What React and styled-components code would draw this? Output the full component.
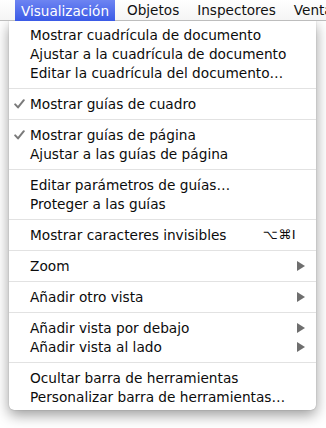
import React from "react";
import styled, { createGlobalStyle } from "styled-components";

const GlobalStyle = createGlobalStyle`
  html, body {
    margin: 0;
    padding: 0;
    background: #ffffff;
  }
  body {
    font-family: "DejaVu Sans", "Liberation Sans", sans-serif;
  }
`;

const menuTitles = ["Visualización", "Objetos", "Inspectores", "Ventana"];

const groups = [
  [
    { label: "Mostrar cuadrícula de documento" },
    { label: "Ajustar a la cuadrícula de documento" },
    { label: "Editar la cuadrícula del documento…" },
  ],
  [{ label: "Mostrar guías de cuadro", checked: true }],
  [
    { label: "Mostrar guías de página", checked: true },
    { label: "Ajustar a las guías de página" },
  ],
  [
    { label: "Editar parámetros de guías…" },
    { label: "Proteger a las guías" },
  ],
  [{ label: "Mostrar caracteres invisibles", shortcut: "⌥⌘I" }],
  [{ label: "Zoom", submenu: true }],
  [{ label: "Añadir otro vista", submenu: true }],
  [
    { label: "Añadir vista por debajo", submenu: true },
    { label: "Añadir vista al lado", submenu: true },
  ],
  [
    { label: "Ocultar barra de herramientas" },
    { label: "Personalizar barra de herramientas…" },
  ],
];

function CheckIcon() {
  return (
    <svg width="11" height="10" viewBox="0 0 11 10">
      <path
        d="M1.2 5.4 L4 8.4 L9.8 1.2"
        fill="none"
        stroke="#7a7a7a"
        strokeWidth="2"
        strokeLinecap="round"
        strokeLinejoin="round"
      />
    </svg>
  );
}

function SubmenuArrow() {
  return (
    <svg width="8" height="10" viewBox="0 0 8 10">
      <polygon points="0,0 8,5 0,10" fill="#6e6e6e" />
    </svg>
  );
}

export default function App() {
  return (
    <>
      <GlobalStyle />
      <Screen>
        <MenuBar>
          {menuTitles.map((t, i) => (
            <MenuTitle key={t} $active={i === 0}>
              {t}
            </MenuTitle>
          ))}
        </MenuBar>
        <Dropdown>
          {groups.map((group, gi) => (
            <React.Fragment key={gi}>
              {gi > 0 && <Separator />}
              {group.map((item) => (
                <Item key={item.label}>
                  <CheckCell>{item.checked && <CheckIcon />}</CheckCell>
                  <Label>{item.label}</Label>
                  {item.shortcut && <Shortcut>{item.shortcut}</Shortcut>}
                  {item.submenu && (
                    <ArrowCell>
                      <SubmenuArrow />
                    </ArrowCell>
                  )}
                </Item>
              ))}
            </React.Fragment>
          ))}
        </Dropdown>
      </Screen>
    </>
  );
}

const Screen = styled.div`
  width: 326px;
  height: 428px;
  overflow: hidden;
  background: #ffffff;
`;

const MenuBar = styled.div`
  height: 21px;
  display: flex;
  align-items: stretch;
  padding-left: 15px;
  background: linear-gradient(#ffffff, #f4f4f4);
  box-shadow: inset 0 -1px 0 #bdbdbd;
  white-space: nowrap;
  overflow: hidden;
  position: relative;
  z-index: 2;
`;

const MenuTitle = styled.div`
  display: flex;
  align-items: center;
  height: ${(p) => (p.$active ? "21px" : "20px")};
  padding: 0 6px;
  margin-right: 6px;
  font-size: 13.6px;
  color: ${(p) => (p.$active ? "#ffffff" : "#111111")};
  background: ${(p) =>
    p.$active ? "linear-gradient(#6d84f2, #3a5ae6)" : "transparent"};
`;

const Dropdown = styled.div`
  width: 307px;
  margin-left: 9px;
  padding: 4px 0;
  background: #ffffff;
  border-radius: 0 0 5px 5px;
  box-shadow: 0 5px 14px rgba(0, 0, 0, 0.4), 0 0 1px rgba(0, 0, 0, 0.4);
  position: relative;
  z-index: 1;
`;

const Item = styled.div`
  height: 19px;
  display: flex;
  align-items: center;
  font-size: 13.7px;
  color: #0c0c0c;
  white-space: nowrap;
`;

const CheckCell = styled.div`
  width: 21px;
  flex: none;
  display: flex;
  justify-content: flex-end;
  padding-right: 5px;
  box-sizing: border-box;
  padding-top: 1px;
`;

const Label = styled.span`
  flex: 1;
`;

const Shortcut = styled.span`
  margin-right: 20px;
  font-size: 13px;
  letter-spacing: 0.5px;
`;

const ArrowCell = styled.span`
  display: flex;
  margin-right: 11px;
`;

const Separator = styled.div`
  height: 12px;
  display: flex;
  align-items: center;

  &::after {
    content: "";
    flex: 1;
    height: 1px;
    background: #e2e2e2;
  }
`;
